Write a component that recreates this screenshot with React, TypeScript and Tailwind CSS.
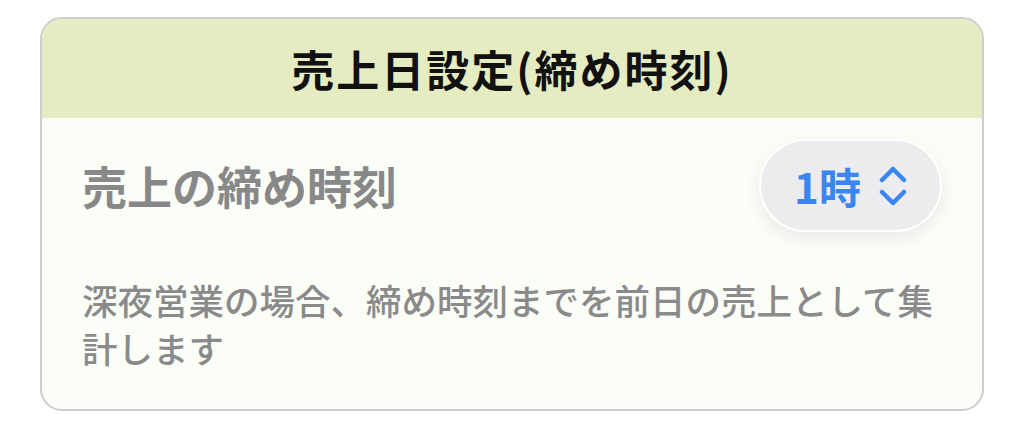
import { useState } from 'react';

const jpFont = { fontFamily: '"Noto Sans CJK JP", "Noto Sans", sans-serif' };

// Up/down chevron glyph used inside the hour picker
const UpDownIcon = () => (
  <svg width="28" height="42" viewBox="0 0 28 42" fill="none" stroke="currentColor" strokeWidth="4.5" strokeLinecap="round" strokeLinejoin="round">
    <path d="M3 15 L14 4 L25 15" />
    <path d="M3 27 L14 38 L25 27" />
  </svg>
);

export default function App() {
  const [hour] = useState(1);

  return (
    <div className="w-[1024px] h-[430px] bg-white pt-[17px] px-[40px]" style={jpFont}>
      <div className="w-[944px] rounded-[22px] border-2 border-[#cdcdcd] overflow-hidden bg-[#fbfdf7]">
        {/* header */}
        <div className="h-[99px] bg-[#e6ecc2] flex items-center justify-center">
          <h1 className="text-[43px] font-bold text-[#111] leading-none tracking-[2px]">売上日設定(締め時刻)</h1>
        </div>

        {/* body */}
        <div className="pl-[40px] pr-[40px] pt-[21px] pb-[37px]">
          <div className="flex items-center justify-between h-[93px]">
            <span className="text-[45px] font-semibold text-[#888888] leading-none">売上の締め時刻</span>
            <button className="w-[183px] h-[93px] rounded-full bg-[#ececee] border-2 border-white shadow-[0_6px_18px_rgba(0,0,0,0.08)] flex items-center justify-center gap-[18px] text-[#3a86f0]">
              <span className="text-[42px] font-semibold leading-none">{hour}時</span>
              <UpDownIcon />
            </button>
          </div>
          <p className="mt-[44px] text-[35.5px] font-medium text-[#8a8a8a] leading-[48px] -mr-[20px]">
            深夜営業の場合、締め時刻までを前日の売上として集計します
          </p>
        </div>
      </div>
    </div>
  );
}
